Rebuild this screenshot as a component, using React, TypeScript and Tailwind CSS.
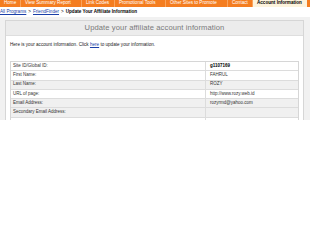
import React from "react";

const tabs = [
  { label: "Home", w: "w-[21px]" },
  { label: "View Summary Report", w: "w-[61px]" },
  { label: "Link Codes", w: "w-[33px]" },
  { label: "Promotional Tools", w: "w-[51px]" },
  { label: "Other Sites to Promote", w: "w-[62px]" },
  { label: "Contact", w: "w-[25px]" },
];

const rows: { k: string; v: string; bold?: boolean; bg: string }[] = [
  { k: "Site ID/Global ID:", v: "g1107169", bold: true, bg: "bg-white" },
  { k: "First Name:", v: "FAHRUL", bg: "bg-white" },
  { k: "Last Name:", v: "ROZY", bg: "bg-[#f0f0f0]" },
  { k: "URL of page:", v: "http://www.rozy.web.id", bg: "bg-white" },
  { k: "Email Address:", v: "rozyrmd@yahoo.com", bg: "bg-[#f0f0f0]" },
  { k: "Secondary Email Address:", v: "", bg: "bg-[#f0f0f0]" },
  { k: "", v: "", bg: "bg-white" },
];

export default function App() {
  return (
    <div
      className="w-[320px] h-[240px] bg-white overflow-hidden"
      style={{ fontFamily: '"Liberation Sans", Arial, sans-serif' }}
    >
      {/* nav */}
      <div className="flex h-[7px] w-[310px] bg-[#f47d20]">
        {tabs.map((t) => (
          <div
            key={t.label}
            className={`${t.w} h-full flex items-center pl-[4px] border-r border-[#f9a35c] text-white text-[4.6px] leading-none whitespace-nowrap`}
          >
            {t.label}
          </div>
        ))}
        <div className="w-[54px] h-full flex items-center pl-[4px] bg-[#fdf3dc] text-black font-bold text-[4.6px] leading-none whitespace-nowrap">
          Account Information
        </div>
      </div>

      {/* breadcrumb */}
      <div className="h-[10px] flex items-center text-[4.6px] leading-none whitespace-nowrap text-black">
        <span className="text-[#1a3fa8] underline">All Programs</span>
        <span className="mx-[2px]">&gt;</span>
        <span className="text-[#1a3fa8] underline">FriendFinder</span>
        <span className="mx-[2px]">&gt;</span>
        <span className="font-bold">Update Your Affiliate Information</span>
      </div>

      {/* outer panel */}
      <div className="w-[310px] h-[103px] bg-[#f1f1f1] pt-[3px] pl-[5px] overflow-hidden">
        <div className="w-[299px] h-[110px] border border-[#d6d6d6] bg-white">
          <div className="h-[15px] bg-[#ececec] border-b border-[#dedede] flex items-center justify-center text-[7.6px] text-[#7a7a7a] leading-none tracking-[0.1px]">
            Update your affiliate account information
          </div>
          <div className="pl-[4px] pt-[6px] text-[4.6px] leading-[6px] text-[#222] whitespace-nowrap">
            Here is your account information. Click{" "}
            <span className="text-[#1a3fa8] underline">here</span> to update your information.
          </div>
          <div className="ml-[4px] mt-[13px] w-[289px] border border-[#d6d6d6]">
            {rows.map((r, i) => (
              <div
                key={i}
                className={`flex h-[9.3px] ${r.bg} border-b border-[#dcdcdc] text-[4.5px] leading-none text-[#333]`}
              >
                <div className="w-[195px] pl-[2px] flex items-center border-r border-[#dcdcdc] whitespace-nowrap">
                  {r.k}
                </div>
                <div
                  className={`flex-1 pl-[4px] flex items-center whitespace-nowrap ${r.bold ? "font-bold text-black" : ""}`}
                >
                  {r.v}
                </div>
              </div>
            ))}
          </div>
        </div>
      </div>
    </div>
  );
}
